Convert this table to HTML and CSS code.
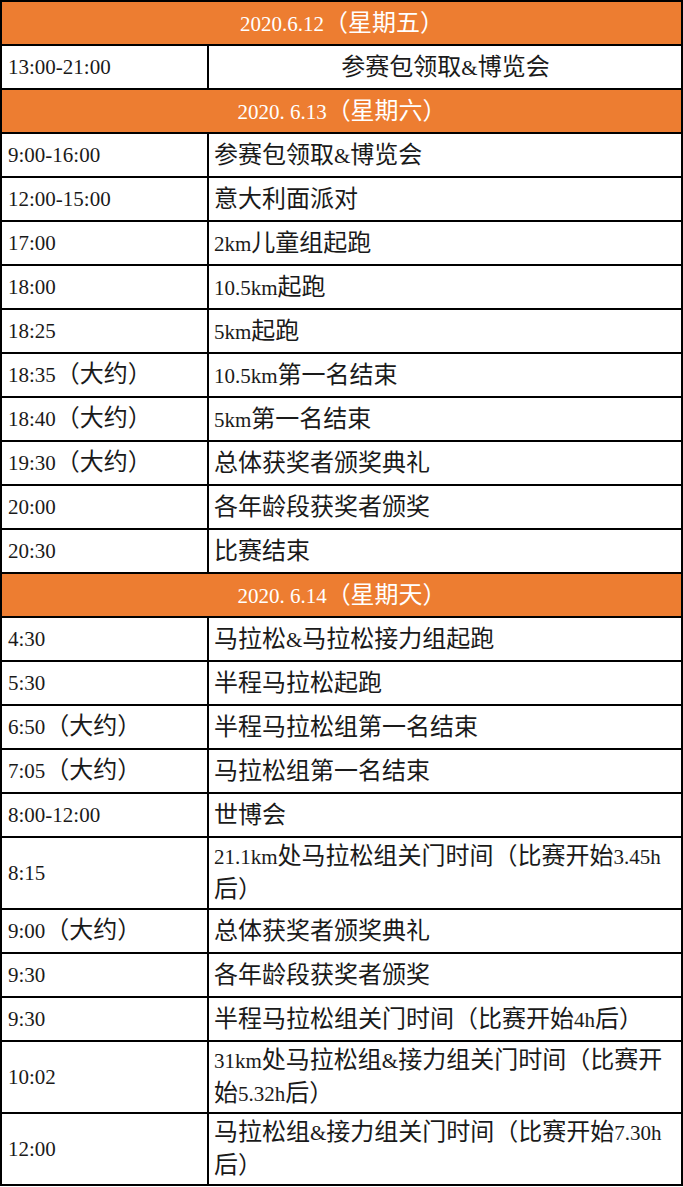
FILE: index.html
```html
<!DOCTYPE html>
<html lang="zh-CN">
<head>
<meta charset="utf-8">
<title>赛程</title>
<link rel="stylesheet" href="styles.css">
</head>
<body>
<table class="schedule">
  <colgroup><col class="c-time"><col class="c-event"></colgroup>
  <tbody>
    <tr class="day"><td colspan="2"><span class="en">2020.6.12</span>（星期五）</td></tr>
    <tr><td class="time">13:00-21:00</td><td class="event center">参赛包领取<span class="en">&amp;</span>博览会</td></tr>
    <tr class="day"><td colspan="2"><span class="en">2020. 6.13</span>（星期六）</td></tr>
    <tr><td class="time">9:00-16:00</td><td class="event">参赛包领取<span class="en">&amp;</span>博览会</td></tr>
    <tr><td class="time">12:00-15:00</td><td class="event">意大利面派对</td></tr>
    <tr><td class="time">17:00</td><td class="event"><span class="en">2km</span>儿童组起跑</td></tr>
    <tr><td class="time">18:00</td><td class="event"><span class="en">10.5km</span>起跑</td></tr>
    <tr><td class="time">18:25</td><td class="event"><span class="en">5km</span>起跑</td></tr>
    <tr><td class="time">18:35<span class="zh">（大约）</span></td><td class="event"><span class="en">10.5km</span>第一名结束</td></tr>
    <tr><td class="time">18:40<span class="zh">（大约）</span></td><td class="event"><span class="en">5km</span>第一名结束</td></tr>
    <tr><td class="time">19:30<span class="zh">（大约）</span></td><td class="event">总体获奖者颁奖典礼</td></tr>
    <tr><td class="time">20:00</td><td class="event">各年龄段获奖者颁奖</td></tr>
    <tr><td class="time">20:30</td><td class="event">比赛结束</td></tr>
    <tr class="day"><td colspan="2"><span class="en">2020. 6.14</span>（星期天）</td></tr>
    <tr><td class="time">4:30</td><td class="event">马拉松<span class="en">&amp;</span>马拉松接力组起跑</td></tr>
    <tr><td class="time">5:30</td><td class="event">半程马拉松起跑</td></tr>
    <tr><td class="time">6:50<span class="zh">（大约）</span></td><td class="event">半程马拉松组第一名结束</td></tr>
    <tr><td class="time">7:05<span class="zh">（大约）</span></td><td class="event">马拉松组第一名结束</td></tr>
    <tr><td class="time">8:00-12:00</td><td class="event">世博会</td></tr>
    <tr><td class="time">8:15</td><td class="event"><span class="en">21.1km</span>处马拉松组关门时间（比赛开始<span class="en">3.45h</span>后）</td></tr>
    <tr><td class="time">9:00<span class="zh">（大约）</span></td><td class="event">总体获奖者颁奖典礼</td></tr>
    <tr><td class="time">9:30</td><td class="event">各年龄段获奖者颁奖</td></tr>
    <tr><td class="time">9:30</td><td class="event">半程马拉松组关门时间（比赛开始<span class="en">4h</span>后）</td></tr>
    <tr><td class="time">10:02</td><td class="event"><span class="en">31km</span>处马拉松组<span class="en">&amp;</span>接力组关门时间（比赛开始<span class="en">5.32h</span>后）</td></tr>
    <tr><td class="time">12:00</td><td class="event">马拉松组<span class="en">&amp;</span>接力组关门时间（比赛开始<span class="en">7.30h</span>后）</td></tr>
  </tbody>
</table>
</body>
</html>
```
FILE: styles.css
```css
html, body {
  margin: 0;
  padding: 0;
  background: #ffffff;
}

.schedule {
  width: 683px;
  border-collapse: collapse;
  table-layout: fixed;
  font-family: "Liberation Serif", "Noto Sans CJK SC", serif;
  font-size: 24px;
  line-height: 33px;
  color: #1a1a1a;
}

.c-time {
  width: 207px;
}

.schedule td {
  border: 2px solid #000000;
  height: 38px;
  padding: 2px 4px 2px 5px;
  vertical-align: middle;
  text-align: left;
}

.schedule td.time {
  font-size: 21px;
  padding-left: 6px;
}

.schedule td.center {
  text-align: center;
}

.day td {
  background: #ed7d31;
  color: #ffffff;
  text-align: center;
}

.en {
  font-size: 21px;
  line-height: 1;
}

.zh {
  font-size: 24px;
  line-height: 1;
}
```
